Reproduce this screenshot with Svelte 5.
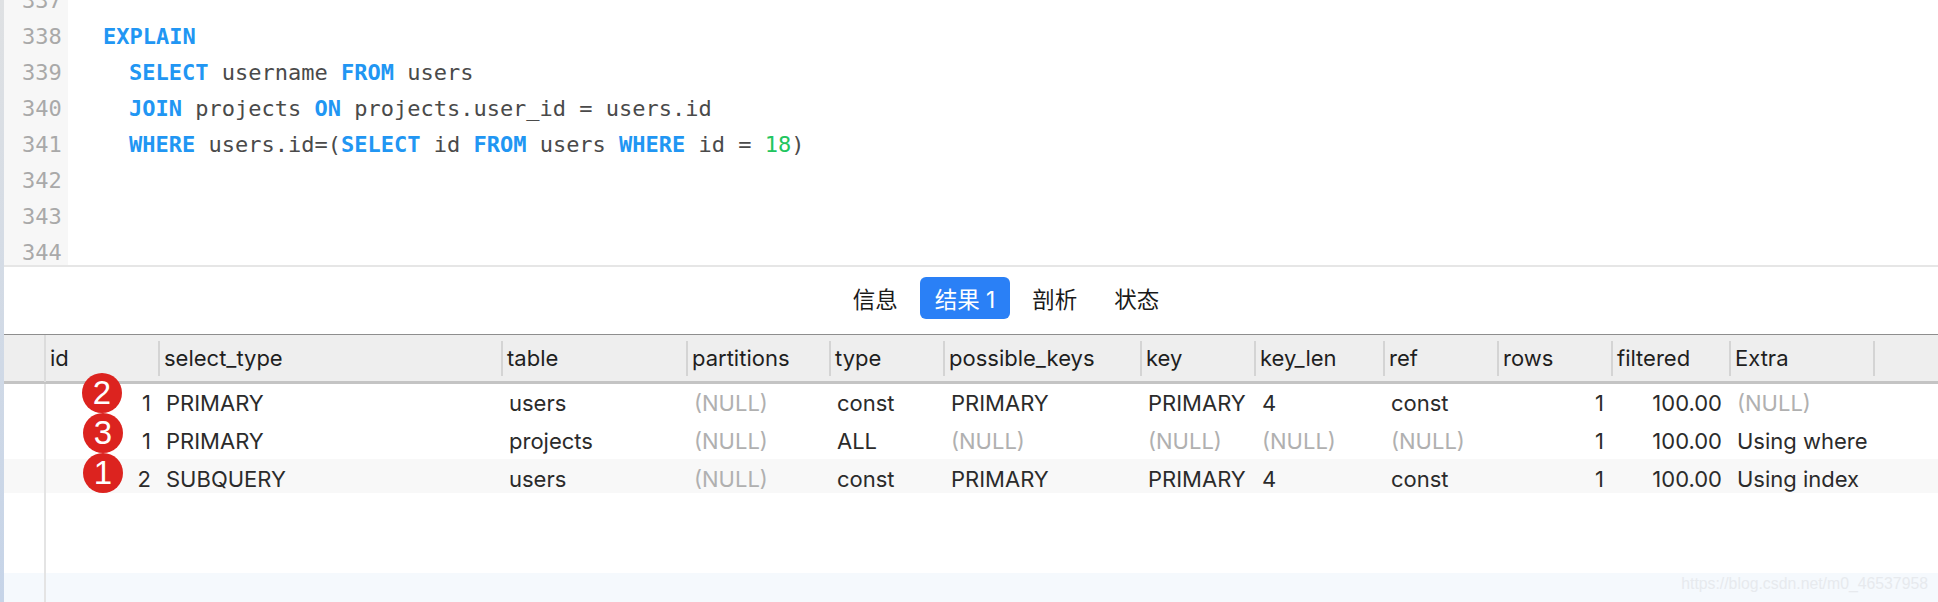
<script>
  const gutter = [337, 338, 339, 340, 341, 342, 343, 344];

  const columns = ["id", "select_type", "table", "partitions", "type", "possible_keys", "key", "key_len", "ref", "rows", "filtered", "Extra"];
  const numeric = [0, 9, 10];

  const rows = [
    ["1", "PRIMARY", "users", null, "const", "PRIMARY", "PRIMARY", "4", "const", "1", "100.00", null],
    ["1", "PRIMARY", "projects", null, "ALL", null, null, null, null, "1", "100.00", "Using where"],
    ["2", "SUBQUERY", "users", null, "const", "PRIMARY", "PRIMARY", "4", "const", "1", "100.00", "Using index"]
  ];

  const tabs = ["信息", "结果 1", "剖析", "状态"];
  const badges = [2, 3, 1];
</script>

<div class="window">
  <div class="edge"></div>
  <div class="main">
    <section class="editor">
      <div class="gutter">
        {#each gutter as n}
          <div>{n}</div>
        {/each}
      </div>
      <div class="code">
        <div><b>EXPLAIN</b></div>
        <div class="indent"><b>SELECT</b> username <b>FROM</b> users</div>
        <div class="indent"><b>JOIN</b> projects <b>ON</b> projects.user_id = users.id</div>
        <div class="indent"><b>WHERE</b> users.id=(<b>SELECT</b> id <b>FROM</b> users <b>WHERE</b> id = <i>18</i>)</div>
      </div>
    </section>

    <nav class="tabs">
      {#each tabs as tab, i}
        <button class:active={i === 1}>{tab}</button>
      {/each}
    </nav>

    <section class="table">
      <div class="row head">
        <div class="stub"></div>
        {#each columns as col}
          <div class="th">{col}</div>
        {/each}
      </div>
      <div class="body">
        {#each rows as row, r}
          <div class="row" class:alt={r === 2}>
            <div class="stub"></div>
            {#each row as cell, c}
              <div class="td" class:num={numeric.includes(c)} class:null={cell === null}>{cell ?? "(NULL)"}</div>
            {/each}
          </div>
        {/each}
        <div class="badges">
          {#each badges as b}
            <span class="badge">{b}</span>
          {/each}
        </div>
      </div>
      <div class="filler"><div class="stub"></div></div>
      <div class="filler tint"><div class="stub"></div></div>
      <span class="mark">https://blog.csdn.net/m0_46537958</span>
    </section>
  </div>
</div>

<style>
  :global(body) {
    margin: 0;
    background: #fff;
    overflow: hidden;
  }

  .window {
    display: flex;
    width: 1938px;
    height: 602px;
    font-family: Inter, "Liberation Sans", "Noto Sans CJK SC", sans-serif;
    color: #222;
  }

  .edge {
    width: 4px;
    flex: none;
    background: linear-gradient(#dfe1e3, #c6d4e8);
  }

  .main {
    flex: 1;
    display: flex;
    flex-direction: column;
    min-width: 0;
  }

  /* editor */
  .editor {
    display: flex;
    height: 265px;
    overflow: hidden;
    border-bottom: 2px solid #e6e6e6;
    font-family: "DejaVu Sans Mono", monospace;
    font-size: 22px;
    line-height: 36px;
  }

  .gutter {
    width: 64px;
    flex: none;
    margin-top: -17px;
    padding-left: 18px;
    box-sizing: border-box;
    background: #f7f7f7;
    color: #a9a9a9;
  }

  .code {
    margin: 19px 0 0 35px;
    color: #4a4a4a;
  }
  .code div {
    white-space: pre;
  }
  .code .indent {
    padding-left: 26px;
  }
  .code b {
    color: #2196f3;
    font-weight: 700;
  }
  .code i {
    color: #22c55e;
    font-style: normal;
  }

  /* tabs */
  .tabs {
    display: flex;
    justify-content: center;
    gap: 8px;
    height: 42px;
    margin-top: 10px;
    padding-left: 70px;
  }
  .tabs button {
    border: none;
    border-radius: 6px;
    padding: 0 14.5px;
    background: none;
    font: inherit;
    font-size: 22.5px;
    color: #1a1a1a;
  }
  .tabs button.active {
    background: #2a80f6;
    color: #fff;
  }

  /* result table */
  .table {
    position: relative;
    flex: 1;
    display: flex;
    flex-direction: column;
    margin-top: 15px;
    font-size: 22px;
  }

  .row {
    display: grid;
    grid-template-columns: 42px 114px 343px 185px 143px 114px 197px 114px 129px 114px 114px 118px 144px;
    height: 38px;
    line-height: 38px;
  }

  .stub {
    width: 42px;
    box-sizing: border-box;
    border-right: 2px solid #e4e4e4;
  }

  .head {
    height: 46px;
    line-height: 47px;
    background: #eeeeee;
    border-top: 1px solid #8e8e8e;
    border-bottom: 3px solid #c4c4c4;
    color: #1f1f1f;
  }
  .head .stub {
    border-right-color: #dcdcdc;
  }

  .th {
    position: relative;
    padding-left: 4px;
  }
  .th::after {
    content: "";
    position: absolute;
    top: 6px;
    bottom: 6px;
    right: 0;
    width: 2px;
    background: #d4d4d4;
  }

  .td {
    padding-left: 6px;
    white-space: nowrap;
    color: #2b2b2b;
  }
  .td.num {
    text-align: right;
    padding: 0 9px 0 0;
  }
  .td.null {
    color: #b0b0b0;
  }

  .alt {
    height: 34px;
    margin-top: -1px;
    line-height: 40px;
    background: #f8f8f8;
  }

  .body {
    position: relative;
  }

  .badges {
    position: absolute;
    left: 78px;
    top: -11px;
    display: flex;
    flex-direction: column;
  }
  .badge {
    width: 40px;
    height: 40px;
    border-radius: 50%;
    background: #dc231f;
    color: #fff;
    text-align: center;
    font-family: "Liberation Sans", sans-serif;
    font-size: 33px;
    line-height: 39px;
  }
  .badge:nth-child(2),
  .badge:nth-child(3) {
    margin-left: 1px;
  }

  .filler {
    display: flex;
    height: 80px;
  }
  .tint {
    flex: 1;
    background: #f5f9fd;
  }

  .mark {
    position: absolute;
    right: 10px;
    bottom: 9px;
    font-family: "Liberation Sans", sans-serif;
    font-size: 15.8px;
    color: #e7eaee;
  }
</style>
